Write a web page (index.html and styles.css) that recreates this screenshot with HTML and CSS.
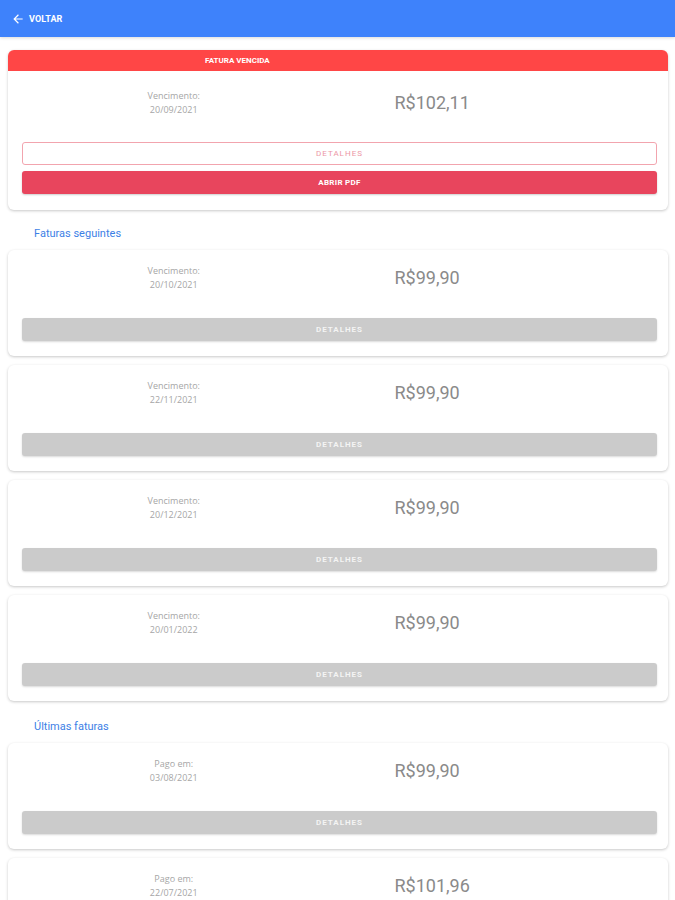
FILE: index.html
```html
<!DOCTYPE html>
<html lang="pt-BR">
<head>
<meta charset="utf-8">
<title>Faturas</title>
<link rel="stylesheet" href="styles.css">
</head>
<body>
<header class="topbar">
  <a class="back">
    <svg class="back-icon" viewBox="0 0 24 24" width="14" height="14"><path d="M20 11H7.83l5.59-5.59L12 4l-8 8 8 8 1.41-1.41L7.83 13H20v-2z" fill="#fff"/></svg>
    <span>VOLTAR</span>
  </a>
</header>
<main class="content">
  <section class="card card-due">
    <div class="due-bar">FATURA VENCIDA</div>
    <div class="card-body">
      <div class="info">
        <div class="info-date"><span>Vencimento:</span><span>20/09/2021</span></div>
        <div class="info-price">R$102,11</div>
      </div>
      <div class="actions">
        <button class="btn btn-outline">DETALHES</button>
        <button class="btn btn-red">ABRIR PDF</button>
      </div>
    </div>
  </section>

  <h2 class="section-title">Faturas seguintes</h2>

  <section class="card">
    <div class="card-body">
      <div class="info">
        <div class="info-date"><span>Vencimento:</span><span>20/10/2021</span></div>
        <div class="info-price">R$99,90</div>
      </div>
      <div class="actions"><button class="btn btn-gray">DETALHES</button></div>
    </div>
  </section>
  <section class="card">
    <div class="card-body">
      <div class="info">
        <div class="info-date"><span>Vencimento:</span><span>22/11/2021</span></div>
        <div class="info-price">R$99,90</div>
      </div>
      <div class="actions"><button class="btn btn-gray">DETALHES</button></div>
    </div>
  </section>
  <section class="card">
    <div class="card-body">
      <div class="info">
        <div class="info-date"><span>Vencimento:</span><span>20/12/2021</span></div>
        <div class="info-price">R$99,90</div>
      </div>
      <div class="actions"><button class="btn btn-gray">DETALHES</button></div>
    </div>
  </section>
  <section class="card">
    <div class="card-body">
      <div class="info">
        <div class="info-date"><span>Vencimento:</span><span>20/01/2022</span></div>
        <div class="info-price">R$99,90</div>
      </div>
      <div class="actions"><button class="btn btn-gray">DETALHES</button></div>
    </div>
  </section>

  <h2 class="section-title section-title-past">Últimas faturas</h2>

  <section class="card">
    <div class="card-body">
      <div class="info">
        <div class="info-date"><span>Pago em:</span><span>03/08/2021</span></div>
        <div class="info-price">R$99,90</div>
      </div>
      <div class="actions"><button class="btn btn-gray">DETALHES</button></div>
    </div>
  </section>
  <section class="card">
    <div class="card-body">
      <div class="info">
        <div class="info-date"><span>Pago em:</span><span>22/07/2021</span></div>
        <div class="info-price">R$101,96</div>
      </div>
      <div class="actions"><button class="btn btn-gray">DETALHES</button></div>
    </div>
  </section>
</main>
</body>
</html>
```
FILE: styles.css
```css
* { box-sizing: border-box; }
html, body { margin: 0; padding: 0; background: #fff; }
body { font-family: Roboto, "Liberation Sans", sans-serif; }

.topbar {
  height: 37px;
  background: #3e82fb;
  display: flex;
  align-items: center;
  padding-left: 11px;
  box-shadow: 0 1px 3px rgba(0,0,0,0.15);
}
.back {
  display: flex;
  align-items: center;
  gap: 4px;
  color: #fff;
  font-size: 9px;
  font-weight: 700;
  letter-spacing: 0.1px;
}
.back-icon { display: block; }

.content {
  padding: 13px 7px 20px 8px;
  display: flex;
  flex-direction: column;
  gap: 9px;
}

.card {
  background: #fff;
  border-radius: 6px;
  box-shadow: 0 1px 3px rgba(0,0,0,0.22);
  overflow: hidden;
  height: 106px;
  flex: none;
}
.card-due { height: 160px; }

.due-bar {
  height: 21px;
  background: #ff4646;
  color: #fff;
  font-size: 8px;
  font-weight: 700;
  display: flex;
  align-items: center;
  padding-left: 197px;
}

.card-body {
  padding: 14px 11px 14px 14px;
  display: flex;
  flex-direction: column;
}
.card-due .card-body { padding-top: 18px; }

.info {
  display: flex;
  align-items: center;
  height: 28px;
}
.info-date {
  width: 50%;
  display: flex;
  flex-direction: column;
  align-items: center;
  font-family: "Open Sans", sans-serif;
  font-size: 9px;
  line-height: 14px;
  color: #a6a6a6;
  padding-right: 14px;
}
.info-price {
  padding-left: 55px;
  font-size: 18px;
  color: #8a8a8a;
  line-height: 20px;
}

.actions {
  margin-top: 26px;
  display: flex;
  flex-direction: column;
  gap: 6px;
}
.card-due .actions { margin-top: 25px; }

.btn {
  height: 23px;
  border-radius: 3px;
  font-family: Roboto, sans-serif;
  font-size: 8px;
  font-weight: 500;
  letter-spacing: 1px;
  display: flex;
  align-items: center;
  justify-content: center;
  width: 100%;
  padding: 0;
  border: none;
}
.btn-outline {
  background: #fff;
  border: 1px solid #f2a4ae;
  color: #ec97a6;
  font-weight: 400;
}
.btn-red {
  background: #e8455d;
  color: #fff;
  font-weight: 700;
  letter-spacing: 0.3px;
  box-shadow: 0 1px 2px rgba(0,0,0,0.2);
}
.btn-gray {
  background: #cbcbcb;
  color: #f4f4f4;
  font-weight: 700;
  box-shadow: 0 1px 2px rgba(0,0,0,0.15);
}

.section-title {
  margin: 8px 0 0 26px;
  font-size: 11px;
  font-weight: 400;
  color: #3d7fe6;
  line-height: 14px;
  height: 14px;
}
.section-title-past {
  margin-top: 10px;
}
```
